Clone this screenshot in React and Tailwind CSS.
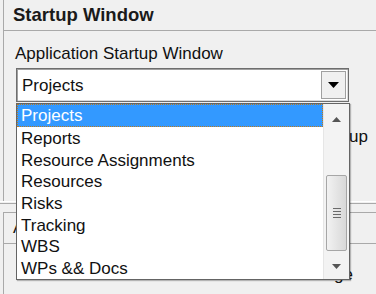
import React from "react";

const items = [
  "Projects",
  "Reports",
  "Resource Assignments",
  "Resources",
  "Risks",
  "Tracking",
  "WBS",
  "WPs && Docs",
];

const App = () => {
  return (
    <div
      className="relative w-[376px] h-[294px] overflow-hidden bg-[#f0f0f0] text-[#111]"
      style={{ fontFamily: '"Liberation Sans", Arial, sans-serif' }}
    >
      {/* page behind the dropdown */}
      <div className="ml-[3px] h-[201px] border-l border-[#a9a9a9]">
        <div className="h-[31px] border-b border-[#a9a9a9] pl-[9px] pt-[5px] text-[18.5px] font-bold leading-[20px] text-[#1a1a1a]">
          Startup Window
        </div>
        <div className="pl-[11px] pt-[14px] text-[17px] leading-[18px]">
          Application Startup Window
        </div>
        <div className="ml-[12px] mt-[5px] flex h-[34px] w-[333px] border border-[#6e6e6e] bg-white shadow-[inset_1px_1px_0_#a0a0a0,inset_-1px_-1px_0_#dcdcdc]">
          <div className="flex-1 pl-[5px] pt-[8px] text-[17px] leading-[18px]">
            Projects
          </div>
          <div className="m-[2px] flex w-[25px] items-center justify-center border border-[#a0a0a0] bg-[#f0f0f0]">
            <svg width="11" height="6" viewBox="0 0 11 6">
              <path d="M0 0 H11 L5.5 6 Z" fill="#000" />
            </svg>
          </div>
        </div>
        <div className="mt-[26px] pr-[8px] text-right text-[17px] leading-[18px]">
          Startup
        </div>
      </div>
      <div className="h-[2px] border-t border-[#ffffff]" />
      <div className="h-[9px] border-t border-[#a9a9a9]" />
      <div className="ml-[3px] flex h-[82px] flex-col border-l border-t border-[#a9a9a9]">
        <div className="h-[31px] border-b border-[#a9a9a9] pl-[9px] pt-[6px] text-[17px] leading-[18px]">
          A
        </div>
        <div className="pr-[23px] pt-[22px] text-right text-[17px] leading-[18px]">
          Change
        </div>
      </div>

      {/* open dropdown list */}
      <div className="absolute left-[16px] top-[103px] flex h-[177px] w-[334px] border border-[#646464] bg-white shadow-[1px_1px_1px_rgba(0,0,0,0.25)]">
        <div className="flex flex-1 flex-col">
          {items.map((item, i) => (
            <div
              key={item}
              className={
                i === 0
                  ? "h-[23px] border border-dotted border-[#c07a1a] bg-[#3399ff] pl-[3px] pt-[1px] text-[17px] leading-[20px] text-white"
                  : "h-[21.7px] pl-[4px] pt-[2px] text-[17px] leading-[20px]"
              }
            >
              {item}
            </div>
          ))}
        </div>
        <div className="flex w-[26px] flex-col items-center border-l border-[#e6e6e6] bg-[#f3f3f3]">
          <div className="flex h-[28px] items-center justify-center pt-[2px]">
            <svg width="9" height="5" viewBox="0 0 9 5">
              <path d="M0 5 H9 L4.5 0 Z" fill="#555" />
            </svg>
          </div>
          <div className="mt-[43px] flex h-[76px] w-[21px] flex-col items-center justify-center gap-[2px] rounded-[2px] border border-[#a6a6a6] bg-gradient-to-r from-[#f2f2f2] to-[#d8d8d8]">
            <div className="h-[1px] w-[8px] bg-[#6a6a6a]" />
            <div className="h-[1px] w-[8px] bg-[#6a6a6a]" />
            <div className="h-[1px] w-[8px] bg-[#6a6a6a]" />
            <div className="h-[1px] w-[8px] bg-[#6a6a6a]" />
          </div>
          <div className="flex flex-1 items-center justify-center pt-[2px]">
            <svg width="9" height="5" viewBox="0 0 9 5">
              <path d="M0 0 H9 L4.5 5 Z" fill="#555" />
            </svg>
          </div>
        </div>
      </div>
    </div>
  );
};

export default App;
